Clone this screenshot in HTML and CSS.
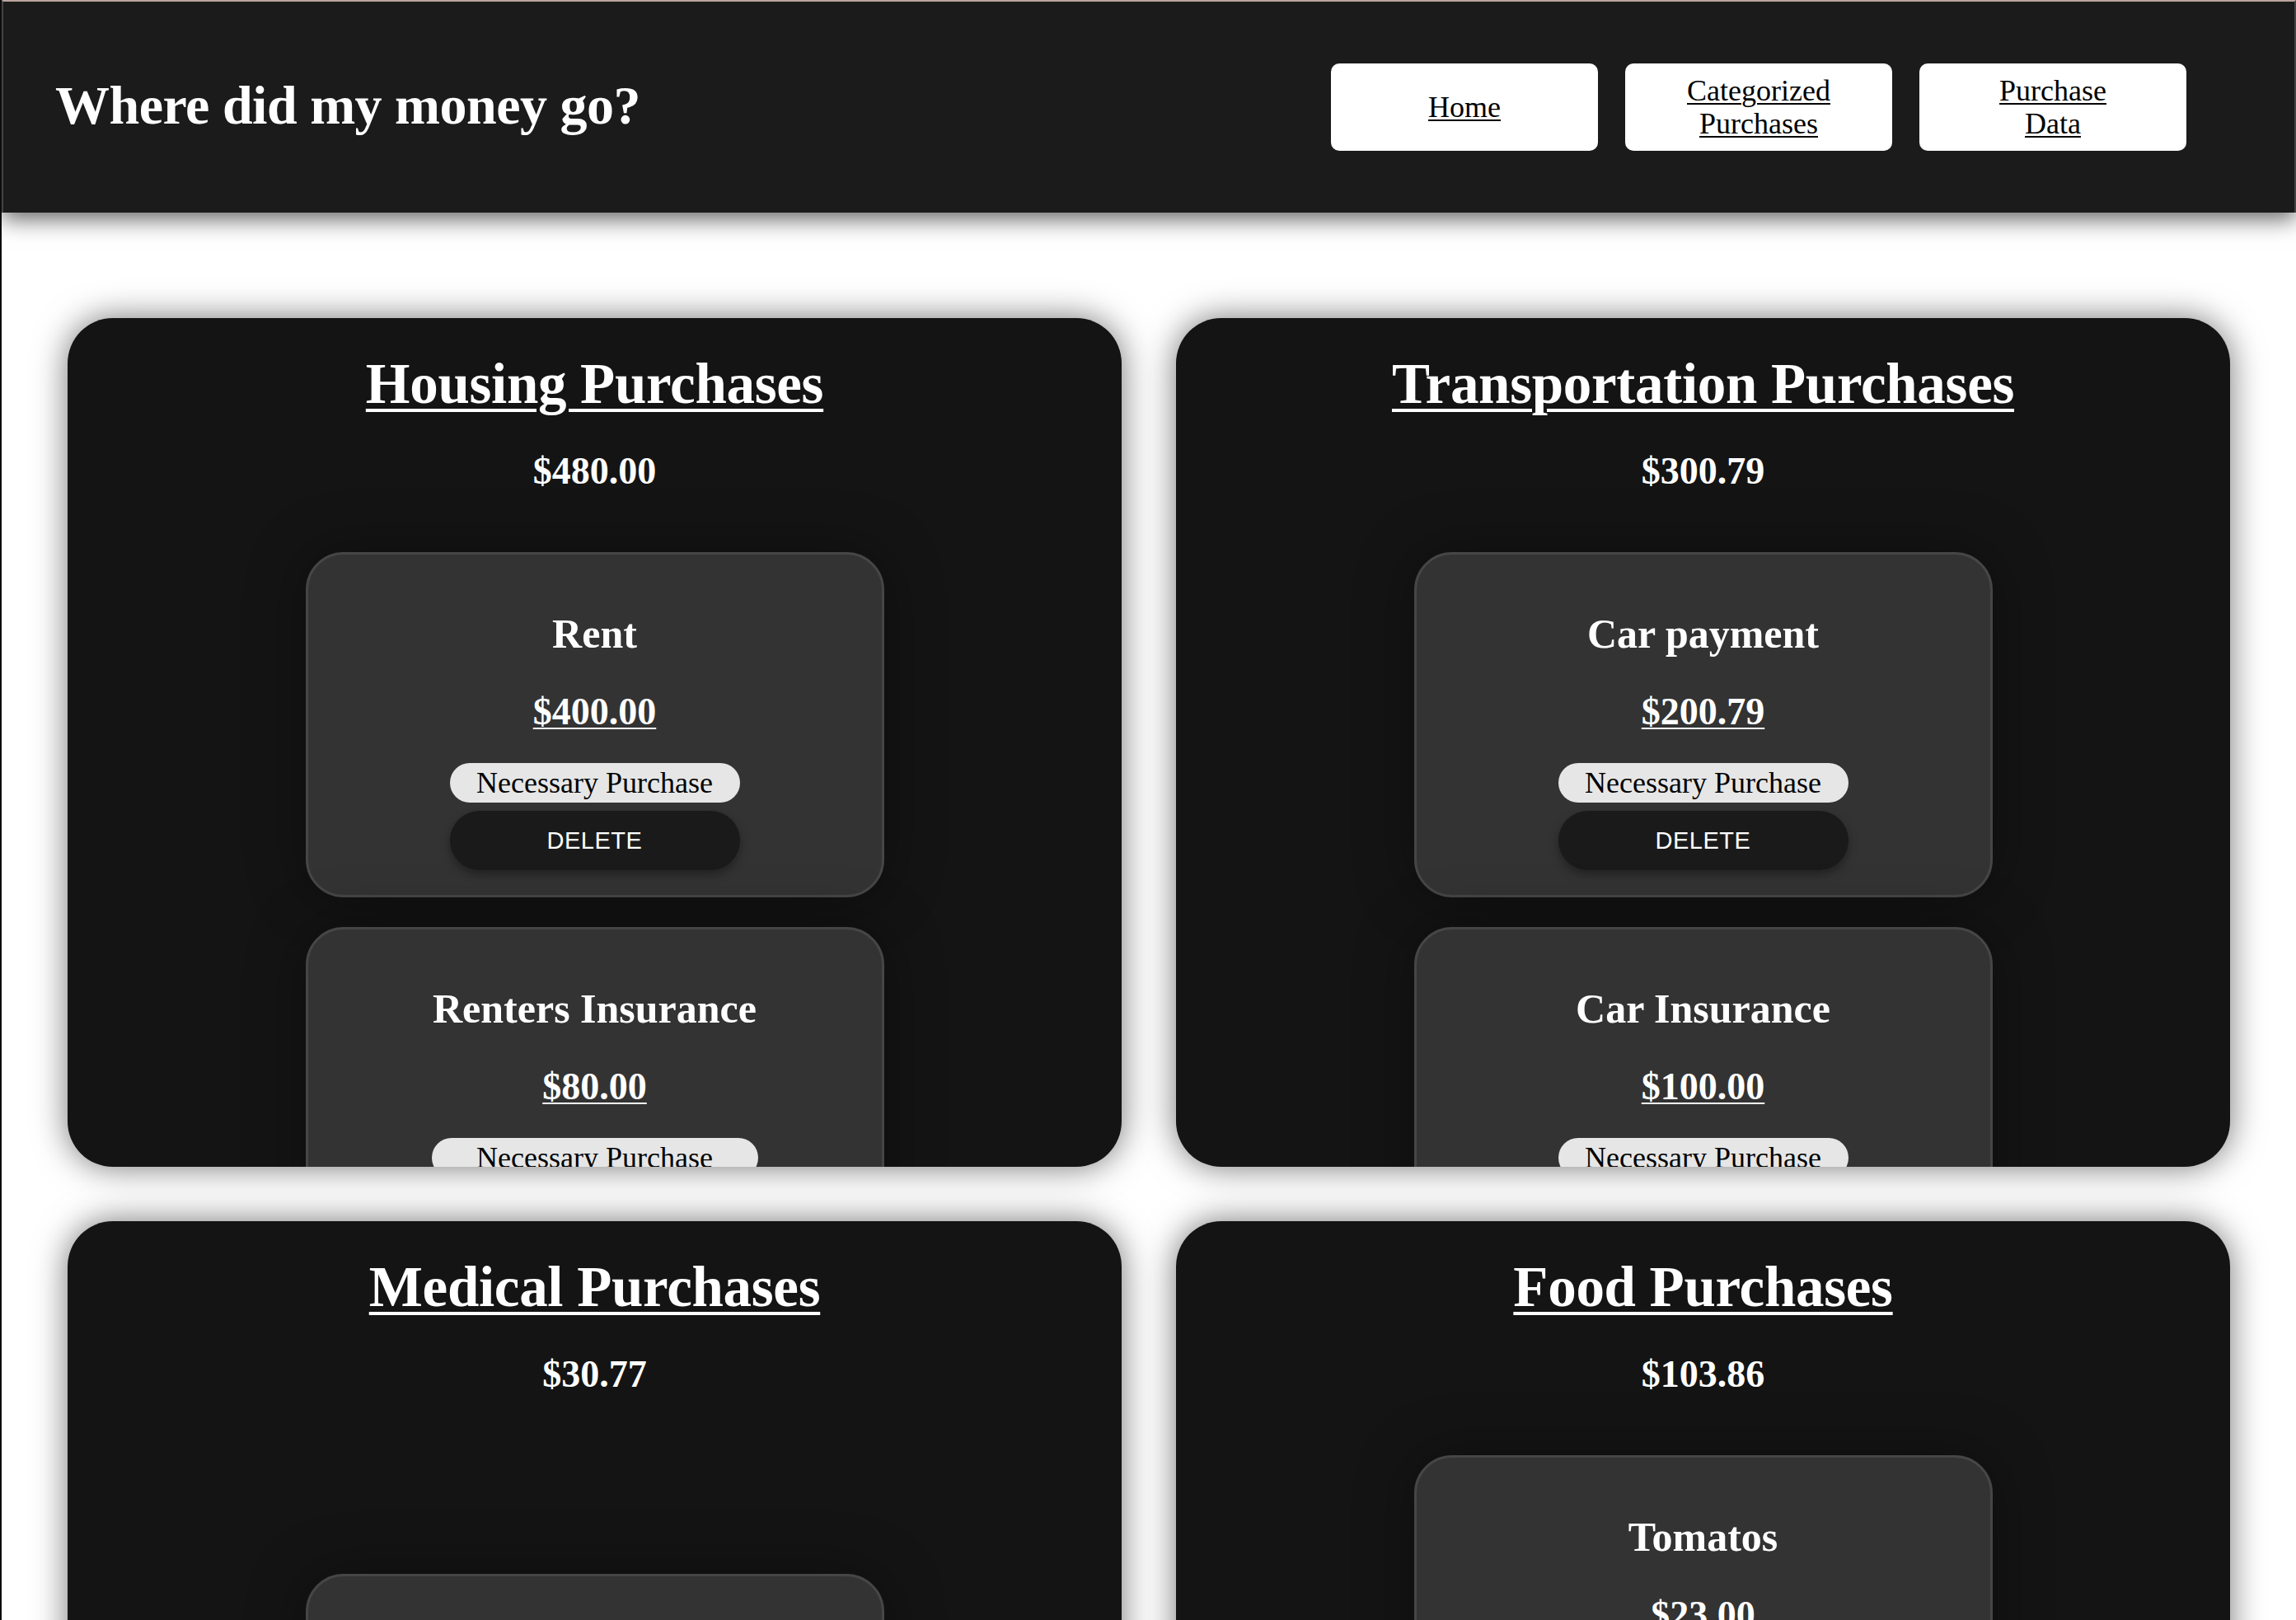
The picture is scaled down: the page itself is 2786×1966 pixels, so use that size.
FILE: index.html
```html
<!DOCTYPE html>
<html lang="en">
<head>
<meta charset="utf-8">
<title>Where did my money go?</title>
<link rel="stylesheet" href="styles.css">
</head>
<body>
<header class="topbar">
  <h1 class="site-title">Where did my money go?</h1>
  <nav class="nav">
    <a class="nav-btn" href="#">Home</a>
    <a class="nav-btn" href="#">Categorized<br>Purchases</a>
    <a class="nav-btn" href="#">Purchase<br>Data</a>
  </nav>
</header>
<main class="grid">
  <section class="category">
    <h2 class="cat-title">Housing Purchases</h2>
    <p class="cat-total">$480.00</p>
    <div class="items">
      <div class="item">
        <h3 class="item-name">Rent</h3>
        <a class="item-price" href="#">$400.00</a>
        <span class="badge">Necessary Purchase</span>
        <button class="delete">DELETE</button>
      </div>
      <div class="item">
        <h3 class="item-name">Renters Insurance</h3>
        <a class="item-price" href="#">$80.00</a>
        <span class="badge badge-wide">Necessary Purchase</span>
        <button class="delete">DELETE</button>
      </div>
    </div>
  </section>
  <section class="category">
    <h2 class="cat-title">Transportation Purchases</h2>
    <p class="cat-total">$300.79</p>
    <div class="items">
      <div class="item">
        <h3 class="item-name">Car payment</h3>
        <a class="item-price" href="#">$200.79</a>
        <span class="badge">Necessary Purchase</span>
        <button class="delete">DELETE</button>
      </div>
      <div class="item">
        <h3 class="item-name">Car Insurance</h3>
        <a class="item-price" href="#">$100.00</a>
        <span class="badge">Necessary Purchase</span>
        <button class="delete">DELETE</button>
      </div>
    </div>
  </section>
  <section class="category">
    <h2 class="cat-title">Medical Purchases</h2>
    <p class="cat-total">$30.77</p>
    <div class="items items-low">
      <div class="item">
        <h3 class="item-name">Prescription</h3>
        <a class="item-price" href="#">$30.77</a>
        <span class="badge">Necessary Purchase</span>
        <button class="delete">DELETE</button>
      </div>
    </div>
  </section>
  <section class="category">
    <h2 class="cat-title">Food Purchases</h2>
    <p class="cat-total">$103.86</p>
    <div class="items">
      <div class="item">
        <h3 class="item-name">Tomatos</h3>
        <a class="item-price" href="#">$23.00</a>
        <span class="badge">Necessary Purchase</span>
        <button class="delete">DELETE</button>
      </div>
    </div>
  </section>
</main>
</body>
</html>
```

FILE: styles.css
```css
* { box-sizing: border-box; }

html, body { background: #ffffff; }

body {
  margin: 0;
  border-left: 2px solid #0c0c0c;
  font-family: "Liberation Serif", "Times New Roman", serif;
  color: #ffffff;
  min-height: 100vh;
}

.topbar {
  position: relative;
  z-index: 2;
  height: 258px;
  background: #1b1b1b;
  border-top: 2px solid #bba59f;
  border-left: 2px solid #444444;
  border-right: 2px solid #444444;
  box-shadow: 0 8px 26px rgba(0, 0, 0, 0.6);
  display: flex;
  align-items: center;
  justify-content: space-between;
  padding: 0 131px 0 63px;
}

.site-title {
  margin: 0 0 4px;
  font-size: 66px;
  font-weight: 700;
  line-height: 1.2;
  color: #ffffff;
  letter-spacing: -0.5px;
}

.nav {
  display: flex;
  gap: 33px;
}

.nav-btn {
  width: 324px;
  height: 106px;
  background: #ffffff;
  border-radius: 10px;
  display: flex;
  align-items: center;
  justify-content: center;
  text-align: center;
  color: #000000;
  font-size: 36px;
  line-height: 40px;
  text-decoration: underline;
  text-decoration-thickness: 2px;
  text-underline-offset: 3px;
}

.grid {
  display: grid;
  grid-template-columns: 1fr 1fr;
  column-gap: 66px;
  row-gap: 66px;
  padding: 128px 80px 80px 80px;
}

.category {
  height: 1030px;
  background: #141414;
  border-radius: 55px;
  box-shadow: 0 0 40px rgba(0, 0, 0, 0.55);
  overflow: hidden;
  display: flex;
  flex-direction: column;
  align-items: center;
  padding-top: 40px;
}

.cat-title {
  margin: 0;
  font-size: 69px;
  font-weight: 700;
  line-height: 80px;
  letter-spacing: -0.3px;
  text-decoration: underline;
  text-decoration-thickness: 4px;
  text-underline-offset: 7px;
}

.cat-total {
  margin: 38px 0 0;
  font-size: 46px;
  font-weight: 700;
  line-height: 55px;
}

.items {
  margin-top: 71px;
  display: flex;
  flex-direction: column;
  align-items: center;
  gap: 36px;
}

.items-low { margin-top: 215px; }

.item {
  width: 702px;
  height: 419px;
  flex-shrink: 0;
  background: #333333;
  border: 3px solid #464646;
  border-radius: 46px;
  box-shadow: 0 0 70px rgba(0, 0, 0, 0.35);
  display: flex;
  flex-direction: column;
  align-items: center;
  padding-top: 66px;
}

.item-name {
  margin: 0;
  font-size: 50px;
  font-weight: 700;
  line-height: 60px;
  color: #ffffff;
}

.item-price {
  margin-top: 37px;
  font-size: 46px;
  font-weight: 700;
  line-height: 55px;
  color: #ffffff;
  text-decoration: underline;
  text-decoration-thickness: 2px;
  text-underline-offset: 4px;
}

.badge {
  margin-top: 35px;
  width: 352px;
  height: 48px;
  border-radius: 24px;
  background: #e6e6e6;
  color: #000000;
  font-size: 36px;
  line-height: 48px;
  text-align: center;
  white-space: nowrap;
}

.badge-wide { width: 396px; }

.delete {
  margin-top: 10px;
  width: 352px;
  height: 72px;
  border: none;
  border-radius: 36px;
  background: #1a1a1a;
  color: #ffffff;
  font-family: "Liberation Sans", Arial, sans-serif;
  font-size: 29px;
  letter-spacing: 0.5px;
  box-shadow: 0 5px 12px rgba(0, 0, 0, 0.35);
}
```
